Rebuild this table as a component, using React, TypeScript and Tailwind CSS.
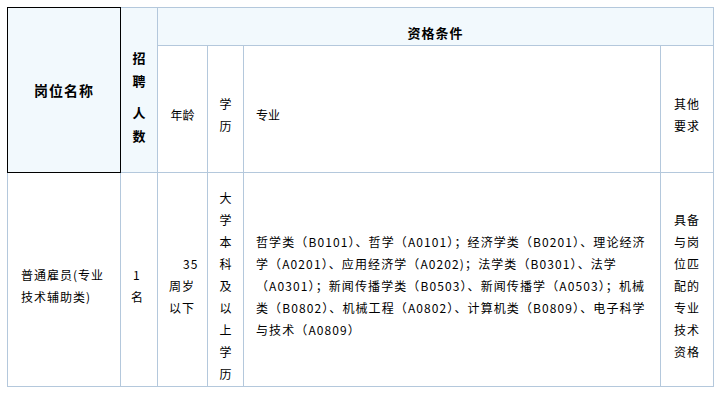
import React from "react";

const B = "border border-[#b4c8dc]";

export default function App() {
  return (
    <div className="w-[722px] h-[393px] bg-white pt-[7px] pl-[7px] text-black font-['Noto_Sans_CJK_SC','Noto_Sans',sans-serif]">
      <table className="border-collapse table-fixed w-[706px] text-[12px] leading-[22px]">
        <colgroup>
          <col className="w-[113px]" />
          <col className="w-[37px]" />
          <col className="w-[50px]" />
          <col className="w-[36px]" />
          <col className="w-[417px]" />
          <col className="w-[53px]" />
        </colgroup>
        <tbody>
          <tr className="h-[38px]">
            <td rowSpan={2} className="border border-black bg-[#f2f9fd] text-center align-middle font-bold text-[14px] tracking-[1px] p-0">
              岗位名称
            </td>
            <td rowSpan={2} className={`${B} bg-[#f2f9fd] text-center align-middle font-bold text-[13px] leading-[23px] pt-[13px] pb-px px-0`}>
              <div>招</div>
              <div>聘</div>
              <div className="mt-[9px]">人</div>
              <div>数</div>
            </td>
            <td colSpan={4} className={`${B} bg-[#f2f9fd] text-center align-middle font-bold text-[13px] tracking-[1px] pt-[13px] pb-px px-0`}>
              资格条件
            </td>
          </tr>
          <tr className="h-[127px]">
            <td className={`${B} text-center align-middle pt-[13px] pb-px px-0`}>年龄</td>
            <td className={`${B} text-center align-middle pt-[13px] pb-px px-0`}>
              <div>学</div>
              <div>历</div>
            </td>
            <td className={`${B} text-left align-middle pt-[13px] pb-px pl-[12px] pr-0`}>专业</td>
            <td className={`${B} text-left align-middle pt-[13px] pb-px pl-[13px] pr-0 tracking-[1px]`}>
              <div>其他</div>
              <div>要求</div>
            </td>
          </tr>
          <tr className="h-[214px]">
            <td className={`${B} text-left align-middle pt-[13px] pb-px pl-[13px] pr-0 whitespace-nowrap tracking-[1px]`}>
              <div>普通雇员(专业</div>
              <div>技术辅助类)</div>
            </td>
            <td className={`${B} text-left align-middle pt-[13px] pb-px pl-[10px] pr-0`}>
              <div className="pl-[2px]">1</div>
              <div>名</div>
            </td>
            <td className={`${B} text-left align-middle pt-[13px] pb-px pl-[11px] pr-0 whitespace-nowrap tracking-[1px]`}>
              <div className="pl-[14px]">35</div>
              <div>周岁</div>
              <div>以下</div>
            </td>
            <td className={`${B} text-center align-middle pt-[13px] pb-px px-0`}>
              {"大学本科及以上学历".split("").map((c, i) => (
                <div key={i}>{c}</div>
              ))}
            </td>
            <td className={`${B} text-left align-middle pt-[13px] pb-px pl-[12px] pr-0 whitespace-nowrap tracking-[1.1px]`}>
              <div>哲学类（B0101）、哲学（A0101）；经济学类（B0201）、理论经济</div>
              <div>学（A0201）、应用经济学（A0202)；法学类（B0301）、法学</div>
              <div>（A0301）；新闻传播学类（B0503）、新闻传播学（A0503）；机械</div>
              <div>类（B0802）、机械工程（A0802）、计算机类（B0809）、电子科学</div>
              <div>与技术（A0809）</div>
            </td>
            <td className={`${B} text-left align-middle pt-[13px] pb-px pl-[13px] pr-0 whitespace-nowrap tracking-[1px]`}>
              <div>具备</div>
              <div>与岗</div>
              <div>位匹</div>
              <div>配的</div>
              <div>专业</div>
              <div>技术</div>
              <div>资格</div>
            </td>
          </tr>
        </tbody>
      </table>
    </div>
  );
}
